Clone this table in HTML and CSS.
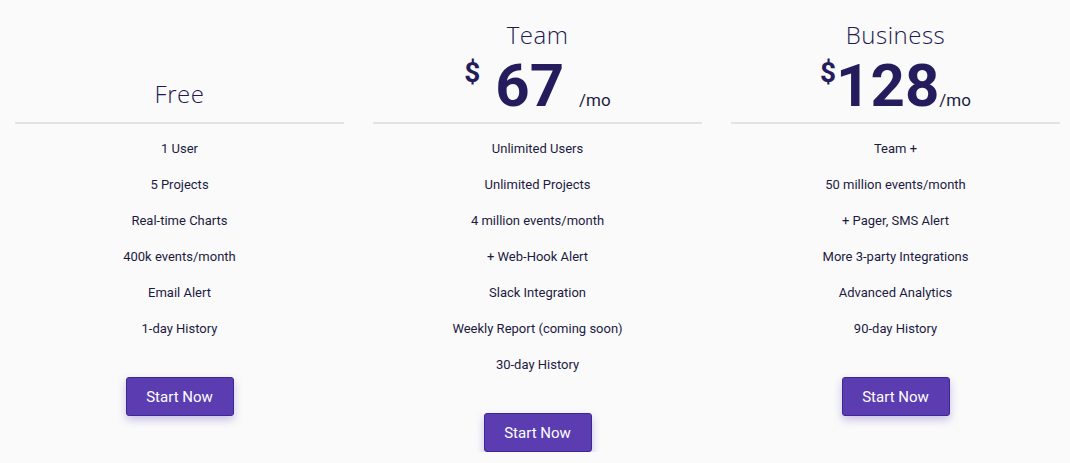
FILE: index.html
```html
<!DOCTYPE html>
<html lang="en">
<head>
  <meta charset="UTF-8">
  <title>Pricing</title>
  <link rel="stylesheet" href="styles.css">
</head>

<body>

<div class="pricing">

  <!-- Free plan -->
  <div class="plan">
    <div class="plan-head">
      <h2 class="plan-name">Free</h2>
    </div>
    <ul class="features">
      <li>1 User</li>
      <li>5 Projects</li>
      <li>Real-time Charts</li>
      <li>400k events/month</li>
      <li>Email Alert</li>
      <li>1-day History</li>
    </ul>
    <button class="startbtn">Start Now</button>
  </div>

  <!-- Team plan -->
  <div class="plan">
    <div class="plan-head">
      <h2 class="plan-name">Team</h2>
      <div class="price"><span class="currency">$</span> 67 <span class="period">/mo</span></div>
    </div>
    <ul class="features">
      <li>Unlimited Users</li>
      <li>Unlimited Projects</li>
      <li>4 million events/month</li>
      <li>+ Web-Hook Alert</li>
      <li>Slack Integration</li>
      <li>Weekly Report (coming soon)</li>
      <li>30-day History</li>
    </ul>
    <button class="startbtn">Start Now</button>
  </div>

  <!-- Business plan -->
  <div class="plan">
    <div class="plan-head">
      <h2 class="plan-name">Business</h2>
      <div class="price"><span class="currency">$</span>128<span class="period">/mo</span></div>
    </div>
    <ul class="features">
      <li>Team +</li>
      <li>50 million events/month</li>
      <li>+ Pager, SMS Alert</li>
      <li>More 3-party Integrations</li>
      <li>Advanced Analytics</li>
      <li>90-day History</li>
    </ul>
    <button class="startbtn">Start Now</button>
  </div>

</div>

</body>
</html>
```

FILE: styles.css
```css
body {
  font-family: 'Roboto', sans-serif;
  background-color: #fafafa;
  margin: 0;
  padding: 0;
  color: #1d1a42;
}

.pricing {
  display: grid;
  grid-template-columns: repeat(3, 329px);
  column-gap: 29px;
  padding-left: 15px;
  align-items: start;
}

.plan {
  display: flex;
  flex-direction: column;
  align-items: center;
}

.plan-head {
  width: 100%;
  height: 124px;
  box-sizing: border-box;
  display: flex;
  flex-direction: column;
  justify-content: flex-end;
  align-items: center;
  padding-bottom: 6px;
  border-bottom: 2px solid #e3e3e3;
}

.plan-name {
  font-family: 'Open Sans', sans-serif;
  font-weight: 300;
  font-size: 24px;
  line-height: 30px;
  letter-spacing: 0.5px;
  color: #1f1a4f;
  margin: 0 0 6px 0;
}

/* Free has no price, so its name sits a bit lower */
.plan-head .plan-name:last-child {
  margin-bottom: 7px;
}

.price {
  font-size: 60px;
  line-height: 60px;
  height: 60px;
  font-weight: bold;
  color: #241c5c;
  white-space: pre;
}

.currency {
  font-size: 28px;
  line-height: 34px;
  vertical-align: top;
}

.period {
  font-size: 17px;
  line-height: 20px;
  font-weight: normal;
  color: #1d1a42;
}

.features {
  list-style: none;
  margin: 7px 0 0 0;
  padding: 0;
  text-align: center;
}

.features li {
  font-size: 13px;
  line-height: 36px;
}

button.startbtn {
  margin-top: 30px;
  width: 108px;
  height: 39px;
  background-color: #5b3db1;
  border: 1px solid #3b2898;
  border-radius: 3px;
  color: white;
  font-family: 'Roboto', sans-serif;
  font-size: 15px;
  cursor: pointer;
  box-shadow: 0 4px 9px rgba(91, 61, 177, 0.3);
}
```
